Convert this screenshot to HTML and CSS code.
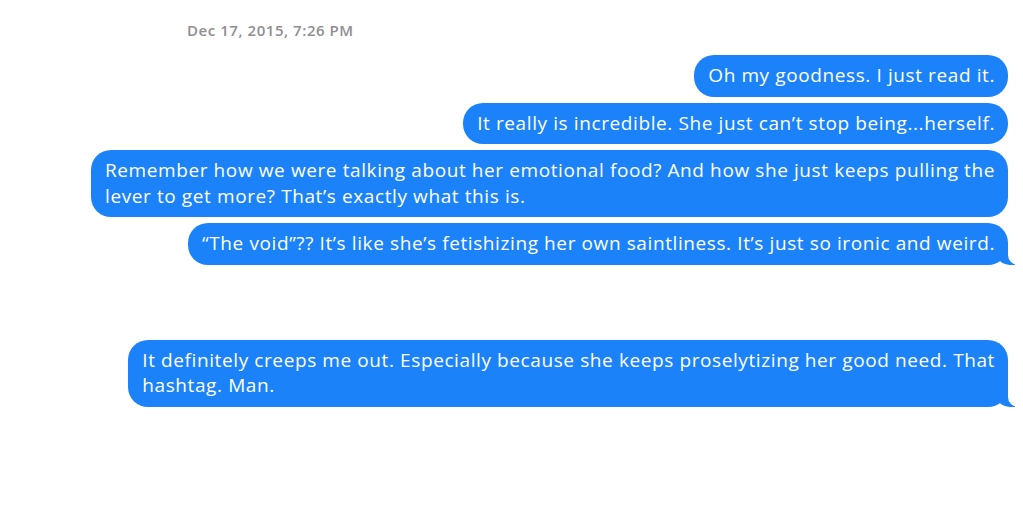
FILE: index.html
```html
<!DOCTYPE html>
<html>
<head>
<meta charset="utf-8">
<link rel="stylesheet" href="styles.css">
</head>
<body>
<div class="chat">
  <div class="stamp">Dec 17, 2015, 7:26 PM</div>
  <div class="group">
    <div class="bubble">Oh my goodness. I just read it.</div>
    <div class="bubble">It really is incredible. She just can’t stop being...herself.</div>
    <div class="bubble">Remember how we were talking about her emotional food? And how she just keeps pulling the<br>lever to get more? That’s exactly what this is.</div>
    <div class="bubble tail">“The void”?? It’s like she’s fetishizing her own saintliness. It’s just so ironic and weird.</div>
  </div>
  <div class="group second">
    <div class="bubble tail">It definitely creeps me out. Especially because she keeps proselytizing her good need. That<br>hashtag. Man.</div>
  </div>
</div>
</body>
</html>
```
FILE: styles.css
```css
html, body {
  margin: 0;
  background: #ffffff;
}
.chat {
  font-family: "Open Sans", "Liberation Sans", sans-serif;
  padding-top: 21px;
}
.stamp {
  padding-left: 187px;
  font-size: 15px;
  font-weight: 600;
  letter-spacing: 0.55px;
  color: #8e8e93;
  line-height: 18px;
  margin-bottom: 16px;
}
.group {
  display: flex;
  flex-direction: column;
  align-items: flex-end;
  gap: 6px;
  padding-right: 15px;
}
.group.second {
  margin-top: 75px;
}
.bubble {
  position: relative;
  max-width: 960px;
  background: #1b82fa;
  color: #ffffff;
  font-size: 19px;
  letter-spacing: 0.6px;
  line-height: 25.5px;
  padding: 8px 13px 8px 14px;
  border-radius: 20px;
}
.tail::before {
  content: "";
  position: absolute;
  bottom: 0;
  right: -7px;
  width: 20px;
  height: 20px;
  background: #1b82fa;
  border-bottom-left-radius: 15px;
  z-index: 0;
}
.tail::after {
  content: "";
  position: absolute;
  bottom: 0;
  right: -10px;
  width: 10px;
  height: 20px;
  background: #ffffff;
  border-bottom-left-radius: 10px;
  z-index: 1;
}
```
